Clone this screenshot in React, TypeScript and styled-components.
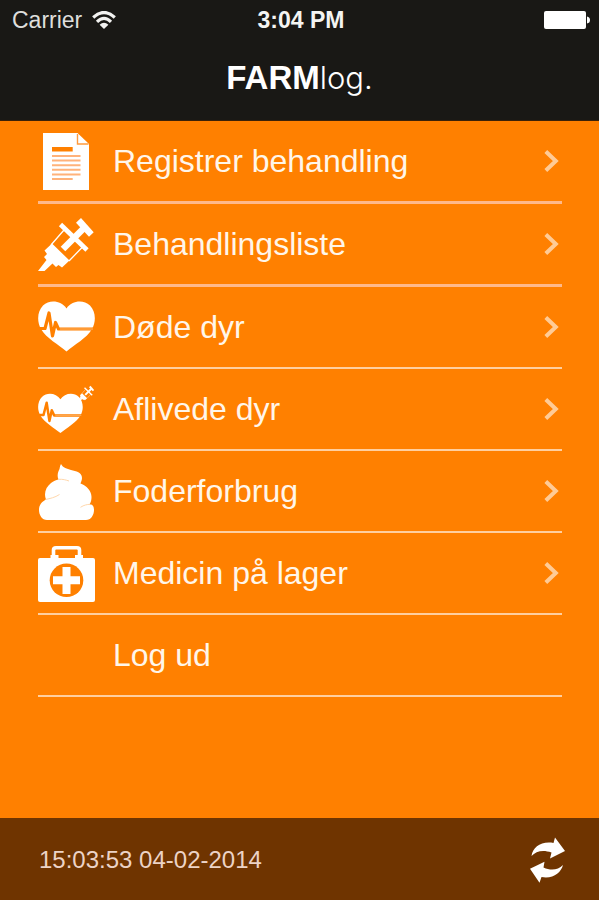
import React from 'react';
import styled, { createGlobalStyle } from 'styled-components';

const ORANGE = '#ff8000';

const GlobalStyle = createGlobalStyle`
  *, *::before, *::after { box-sizing: border-box; }
  body {
    margin: 0;
    background: ${ORANGE};
    font-family: "Liberation Sans", Arial, Helvetica, sans-serif;
  }
`;

const Screen = styled.div`
  display: flex;
  flex-direction: column;
  min-height: 100vh;
  background: ${ORANGE};
  color: #fff;
`;

const Header = styled.header`
  background: #191815;
  border-bottom: 1px solid #3a2108;
`;

const StatusBar = styled.div`
  display: grid;
  grid-template-columns: 1fr auto 1fr;
  align-items: center;
  height: 40px;
  padding: 0 9px 0 12px;
  font-size: 23px;
`;

const Carrier = styled.div`
  display: flex;
  align-items: center;
  gap: 10px;
  color: #dededc;
`;

const Clock = styled.time`
  font-weight: 700;
  color: #f4f4f2;
`;

const Battery = styled.svg`
  justify-self: end;
`;

const Logo = styled.h1`
  display: flex;
  justify-content: center;
  align-items: baseline;
  height: 80px;
  margin: 0;
  font-size: 33px;
  line-height: 75px;
  font-weight: 700;
`;

const LogoLight = styled.span`
  font-family: Inter, "Liberation Sans", sans-serif;
  font-size: 31px;
  font-weight: 300;
`;

const Main = styled.main`
  flex: 1;
  padding: 0 37px 0 38px;
`;

const Menu = styled.ul`
  list-style: none;
  margin: 0;
  padding: 0;
`;

const MenuItem = styled.li<{ $heavy?: boolean }>`
  border-bottom: ${(p) => (p.$heavy ? '3px solid #ffb98a' : '2px solid #ffcf9f')};
`;

const MenuLink = styled.a`
  display: grid;
  grid-template-columns: 58px 1fr auto;
  align-items: center;
  column-gap: 17px;
  height: 80px;
  padding-right: 3px;
  color: #fff6ea;
  font-size: 32px;
  text-decoration: none;
`;

const Label = styled.span`
  grid-column: 2;
`;

const Footer = styled.footer`
  display: flex;
  align-items: center;
  justify-content: space-between;
  height: 82px;
  padding: 2px 33px 0 39px;
  background: #6f3400;
`;

const Timestamp = styled.time`
  font-size: 24px;
  color: #ecd3c6;
`;

const IconButton = styled.button`
  display: flex;
  padding: 0;
  border: 0;
  background: none;
  color: #fff;
  cursor: pointer;
`;

const IconBox = ({ children }: { children: React.ReactNode }) => (
  <svg width="58" height="58" viewBox="0 0 58 58" fill="#fff" aria-hidden="true">
    {children}
  </svg>
);

const SyringeShape = () => (
  <g>
    <path d="M43 3L55.7 17.3L51 21.7L38 7.7Z" />
    <path d="M46 13L25 34" stroke="#fff" strokeWidth="6.5" />
    <path d="M22.5 9.5L49 35" stroke="#fff" strokeWidth="4.6" />
    <path d="M26 15L13 30M45.5 31L31 46" stroke="#fff" strokeWidth="1.3" />
    <path d="M14 28.5L31.5 45.5L24 52.5L20.5 50L18 52L14.5 48.5L6.5 56H0L8.5 45L6 42L9 39L6.5 35.5Z" />
  </g>
);

const HeartShape = () => (
  <g>
    <path d="M28.5 53.4C21 47 8 40 3 31C-1.5 23 -.5 13 5 7.5C12 1 23.5 3 28.5 10.5C33.5 3 45 1 52 7.5C57.5 13 58.5 23 54 31C49 40 36 47 28.5 53.4Z" />
    <path
      d="M0 30.5H7L11 15L14.5 38L17.5 24.5L20.5 31H58"
      fill="none"
      stroke={ORANGE}
      strokeWidth="3.2"
      strokeLinejoin="round"
    />
    <path d="M22 31H55" stroke="#ffb56a" strokeWidth="1" />
  </g>
);

const DocumentIcon = () => (
  <IconBox>
    <path d="M5 1H39.5L51 12V58H5Z" />
    <path d="M39.5 2V12H50.5" fill="none" stroke="#ff9a3c" strokeWidth="1.4" />
    <path d="M14 15H34.7V19.5H14Z" fill={ORANGE} />
    <path
      d="M14 24H42.5M14 28.6H42.5M14 33.2H42.5M14 37.8H42.5M14 42.4H42.5M14 47H34.7"
      stroke="#ffb27a"
      strokeWidth="2"
    />
  </IconBox>
);

const SyringeIcon = () => (
  <IconBox>
    <SyringeShape />
  </IconBox>
);

const HeartIcon = () => (
  <IconBox>
    <HeartShape />
  </IconBox>
);

const HeartSyringeIcon = () => (
  <IconBox>
    <g transform="translate(0 11) scale(0.787)">
      <HeartShape />
    </g>
    <g transform="translate(40 5) scale(0.29)">
      <SyringeShape />
    </g>
  </IconBox>
);

const HeapIcon = () => (
  <IconBox>
    <path d="M23 2C25 6 29 6.5 33 8C38 9.500 44 10 44 16C44 18 43 20 42.5 21.5C49 24 53.5 29 53.5 35C53.5 38 53 40 51.5 42.5C55 42 56 45 56 48C56 53 53 58 48 58H9C4 58 1 53 1 48C1 43 3.5 40 8 37.5C5.5 31 8 25 13 21C15.5 19 18 18 20.5 17.5C18.5 13 20.5 9 21.5 7C22 5 22 3.5 23 2Z" />
    <path
      d="M7.5 37.5C12 36.5 17 35.5 21.5 32.5M52 42.3C49 42.5 46 43 42.5 45.3M20.5 17.3C25 17 28 18 31 19"
      fill="none"
      stroke="#ffd2a3"
      strokeWidth="0.9"
    />
  </IconBox>
);

const FirstAidIcon = () => (
  <IconBox>
    <path d="M15.5 14V6Q15.5 3.8 18 3.8H39Q41.5 3.8 41.5 6V14" fill="none" stroke="#fff" strokeWidth="3.6" />
    <path d="M12.5 11H20.5V15H12.5ZM37 11H45V15H37Z" />
    <rect x="0" y="14" width="57" height="44" rx="2" />
    <circle cx="28.5" cy="36.3" r="16.8" fill={ORANGE} />
    <path d="M24.5 23H32.5V32.3H42V40.3H32.5V50H24.5V40.3H15V32.3H24.5Z" />
  </IconBox>
);

const Chevron = () => (
  <svg width="15" height="22" viewBox="0 0 15 22" fill="none" aria-hidden="true">
    <path d="M1.8 1.5L11.8 11L1.8 20.5" stroke="#ffcb96" strokeWidth="4" />
  </svg>
);

const WifiIcon = () => (
  <svg width="24" height="18" viewBox="0 0 24 18" fill="none" aria-hidden="true">
    <path d="M1.2 6.5Q12 -3.5 22.8 6.5M5 10.8Q12 4 19 10.8" stroke="#f2f2f0" strokeWidth="3.2" />
    <path d="M12 18L7.6 13.700Q12 9.800 16.4 13.7Z" fill="#f2f2f0" />
  </svg>
);

const RefreshIcon = () => (
  <svg width="36" height="46" viewBox="0 0 36 46" fill="currentColor" aria-hidden="true">
    <path d="M1.5 19C3 10 11 4 23.5 6L25 .5L35 14L20 21.5L21.5 15.5C13 12.5 6 14 1.5 19Z" />
    <path d="M33 28C31 36 23 42 11.500 40L9.5 45.7L0 31.7L14.5 24.7L13.5 30.5C21 34 28 33 33 28Z" />
  </svg>
);

const items = [
  { label: 'Registrer behandling', href: '#registrer', Icon: DocumentIcon, heavy: true },
  { label: 'Behandlingsliste', href: '#behandlinger', Icon: SyringeIcon, heavy: true },
  { label: 'Døde dyr', href: '#doede-dyr', Icon: HeartIcon },
  { label: 'Aflivede dyr', href: '#aflivede-dyr', Icon: HeartSyringeIcon },
  { label: 'Foderforbrug', href: '#foderforbrug', Icon: HeapIcon },
  { label: 'Medicin på lager', href: '#medicin', Icon: FirstAidIcon },
];

export default function App() {
  return (
    <Screen>
      <GlobalStyle />
      <Header>
        <StatusBar>
          <Carrier>
            Carrier
            <WifiIcon />
          </Carrier>
          <Clock>3:04 PM</Clock>
          <Battery width="46" height="18" viewBox="0 0 46 18" fill="#fff" aria-hidden="true">
            <rect x="0" y="0" width="42" height="18" rx="2" />
            <path d="M43 5.5Q46 6 46 9T43 12.5Z" />
          </Battery>
        </StatusBar>
        <Logo>
          FARM<LogoLight>log.</LogoLight>
        </Logo>
      </Header>
      <Main>
        <nav>
          <Menu>
            {items.map(({ label, href, Icon, heavy }) => (
              <MenuItem key={href} $heavy={heavy}>
                <MenuLink href={href}>
                  <Icon />
                  <Label>{label}</Label>
                  <Chevron />
                </MenuLink>
              </MenuItem>
            ))}
            <MenuItem>
              <MenuLink href="#log-ud">
                <Label>Log ud</Label>
              </MenuLink>
            </MenuItem>
          </Menu>
        </nav>
      </Main>
      <Footer>
        <Timestamp>15:03:53 04-02-2014</Timestamp>
        <IconButton type="button" aria-label="Opdater">
          <RefreshIcon />
        </IconButton>
      </Footer>
    </Screen>
  );
}
